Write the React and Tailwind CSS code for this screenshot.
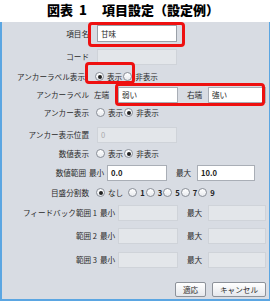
import React from "react";

const Radio = ({ checked, label }) => (
  <div className="flex items-center">
    <span className="w-[9px] h-[9px] rounded-full border border-[#8a8f98] bg-gradient-to-b from-white to-[#e8eaee] flex items-center justify-center">
      {checked && <span className="w-[4px] h-[4px] rounded-full bg-[#222]" />}
    </span>
    <span className="ml-[3px] mr-[1px]">{label}</span>
  </div>
);

const Field = ({ value, disabled, w = "w-[60px]" }) => (
  <div
    className={`${w} h-4 flex items-center px-[3px] border ${
      disabled ? "bg-[#e3e6ea] border-[#cfd3d9]" : "bg-white border-[#a9aeb6]"
    }`}
  >
    <span className="text-[#222] font-bold">{value}</span>
  </div>
);

function Row({ label, labelW = "w-[88px]", className = "", children }) {
  return (
    <div className={`flex items-center h-4 ${className}`}>
      <div className={`${labelW} text-right shrink-0 pr-[1px]`}>{label}</div>
      {children}
    </div>
  );
}

function RangeRow({ label, labelW, className, left = "最小", right = "最大", a, b, disabled }) {
  return (
    <div className={`flex items-center h-4 ${className}`}>
      <div className={`${labelW} text-right shrink-0`}>{label}</div>
      <div className="w-[18px] ml-[3px] shrink-0">{left}</div>
      <Field value={a} disabled={disabled} />
      <div className="w-[30px] pl-[9px] shrink-0">{right}</div>
      <Field value={b} disabled={disabled} w="w-[58px]" />
    </div>
  );
}

export default function App() {
  return (
    <div className="w-[272px] h-[303px] bg-white text-[7.6px] text-[#2a2a2a] font-['Noto_Sans_CJK_JP','Noto_Sans',sans-serif]">
      {/* title */}
      <div className="h-[22px] flex items-center pl-[47px] text-[13px] font-black text-black pb-[2px]">
        <span>図表</span>
        <span className="ml-[6px]">1</span>
        <span className="ml-[15px]">項目設定（設定例）</span>
      </div>
      <div className="relative w-[270px] h-[279px] bg-[#d8dce3] border-l-2 border-r border-b-2 border-[#5ba6e2] pt-[3px]">
        <Row label="項目名" className="h-[17px]">
          <div className="ml-[7px] w-[80px] h-[17px] bg-white border border-[#9aa0a8] flex items-center px-[3px]">
            甘味
          </div>
        </Row>
        <Row label="コード" className="mt-[7px]">
          <div className="ml-[7px]">
            <Field disabled w="w-[80px]" />
          </div>
        </Row>
        <Row label="アンカーラベル表示" labelW="w-[84px]" className="mt-[4px]">
          <div className="flex items-center ml-[9px]">
            <Radio checked label="表示" />
            <Radio label="非表示" />
          </div>
        </Row>
        <div className="flex items-center h-4 mt-[2px]">
          <div className="w-[87px] text-right shrink-0">アンカーラベル</div>
          <div className="w-[24px] ml-[5px] shrink-0">左端</div>
          <Field value={<span className="font-normal">弱い</span>} w="w-[60px]" />
          <div className="w-[30px] pl-[9px] shrink-0">右端</div>
          <Field value={<span className="font-normal">強い</span>} w="w-[58px]" />
        </div>
        <Row label="アンカー表示" className="mt-[2px]">
          <div className="flex items-center ml-[6px]">
            <Radio label="表示" />
            <Radio checked label="非表示" />
          </div>
        </Row>
        <Row label="アンカー表示位置" className="mt-[6px]">
          <div className="ml-[7px]">
            <Field disabled w="w-[80px]" value={<span className="font-normal text-[#aaa]">0</span>} />
          </div>
        </Row>
        <Row label="数値表示" className="mt-[3px]">
          <div className="flex items-center ml-[6px]">
            <Radio label="表示" />
            <Radio checked label="非表示" />
          </div>
        </Row>
        <RangeRow label="数値範囲" labelW="w-[84px]" className="mt-[3px]" a="0.0" b="10.0" />
        <Row label="目盛分割数" className="mt-[4px]">
          <div className="flex items-center ml-[6px] font-bold text-[#222]">
            <Radio checked label={<span className="font-normal text-[#2a2a2a] mr-[4px]">なし</span>} />
            <Radio label="1" />
            <Radio label="3" />
            <Radio label="5" />
            <Radio label="7" />
            <Radio label="9" />
          </div>
        </Row>
        <RangeRow label="フィードバック範囲 1" labelW="w-[95px]" className="mt-[4px]" disabled />
        <RangeRow label="範囲 2" labelW="w-[95px]" className="mt-[7px]" disabled />
        <RangeRow label="範囲 3" labelW="w-[95px]" className="mt-[8px]" disabled />
        <div className="flex justify-end gap-[6px] mt-[14px] pr-[3px]">
          <button className="w-[31px] h-[15px] rounded-[2px] border border-[#8d929a] bg-gradient-to-b from-white to-[#e6e8ec] text-[7.6px] flex items-center justify-center">
            適応
          </button>
          <button className="w-[54px] h-[15px] rounded-[2px] border border-[#8d929a] bg-gradient-to-b from-white to-[#e6e8ec] text-[7.6px] flex items-center justify-center">
            キャンセル
          </button>
        </div>

        {/* highlight boxes */}
        <div className="absolute left-[86px] top-0 w-[97px] h-[25px] border-[3px] border-[#ee1010] rounded-[4px]" />
        <div className="absolute left-[83px] top-[40px] w-[50px] h-[22px] border-[3px] border-[#ee1010] rounded-[4px]" />
        <div className="absolute left-[113px] top-[61px] w-[150px] h-[23px] border-[3px] border-[#ee1010] rounded-[4px]" />
      </div>
    </div>
  );
}
